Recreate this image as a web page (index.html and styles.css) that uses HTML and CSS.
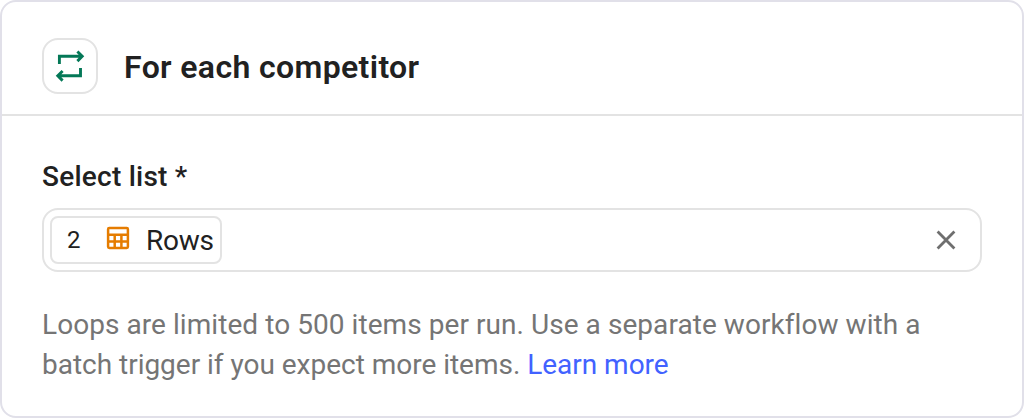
FILE: index.html
```
<!DOCTYPE html>
<html lang="en">
<head>
  <meta charset="UTF-8">
  <meta name="viewport" content="width=device-width, initial-scale=1.0">
  <link rel="stylesheet" href="styles.css">
  <title>For each competitor</title>
</head>
<body>
<div class="card">
  <div class="header">
    <div class="iconBox">
      <svg width="52" height="52" viewBox="44 40 52 52" fill="none" stroke="#047857" stroke-width="2.9">
        <path d="M59.4 64V56.3H82M77.4 51.5L82.2 56.3L77.4 61.1" />
        <path d="M80.5 68V75.8H58M62.6 71L57.8 75.8L62.6 80.6" />
      </svg>
    </div>
    <h1 class="title">For each competitor</h1>
  </div>
  <div class="content">
    <label class="label">Select list *</label>
    <div class="field">
      <div class="chip">
        <span class="chipNumber">2</span>
        <svg class="tableIcon" width="24" height="24" viewBox="0 0 24 24" fill="none" stroke="#e57c00" stroke-width="2.5">
          <rect x="2.1" y="2.1" width="19.8" height="19.8" rx="1.2" />
          <path d="M2 8.8H22M2 15.5H22M8.7 8.8V22M15.4 8.8V22" />
        </svg>
        <span class="chipText">Rows</span>
      </div>
      <svg class="clear" width="20" height="20" viewBox="0 0 20 20" fill="none" stroke="#6f6f6f" stroke-width="2.8">
        <path d="M1.6 1.6L18.4 18.4M18.4 1.6L1.6 18.4" />
      </svg>
    </div>
    <p class="help">
      <span class="lineOne">Loops are limited to 500 items per run. Use a separate workflow with a</span><br>
      <span class="lineTwo">batch trigger if you expect more items. <a class="link">Learn more</a></span>
    </p>
  </div>
</div>
</body>
</html>
```
FILE: styles.css
```
* {
  box-sizing: border-box;
}

body {
  margin: 0;
  background: #fff;
  color: #212121;
  font-family: Roboto, sans-serif;
}

.card {
  height: 418px;
  border: 2px solid #e1e0e9;
  border-radius: 16px;
  overflow: hidden;
}

.header {
  display: flex;
  align-items: center;
  gap: 26px;
  height: 114px;
  padding: 16px 40px 0;
  border-bottom: 2px solid #e3e3e3;
}

.iconBox {
  width: 56px;
  height: 56px;
  border: 2px solid #e3e3e3;
  border-radius: 16px;
}

.iconBox svg {
  display: block;
}

.title {
  margin: 2px 0 0;
  font-size: 32px;
  line-height: 40px;
  font-weight: 600;
  letter-spacing: 0.36px;
}

.content {
  padding: 41px 40px 0;
}

.label {
  display: block;
  font-size: 28px;
  line-height: 40px;
  font-weight: 500;
  letter-spacing: 0.24px;
}

.field {
  display: flex;
  align-items: center;
  justify-content: space-between;
  height: 64px;
  margin-top: 11px;
  padding: 0 24px 0 6px;
  border: 2px solid #e3e3e3;
  border-radius: 16px;
}

.chip {
  display: flex;
  align-items: center;
  width: 172px;
  height: 48px;
  padding-left: 15px;
  border: 2px solid #e3e3e3;
  border-radius: 8px;
}

.chipNumber {
  width: 39px;
  font-size: 24px;
}

.tableIcon {
  margin-top: -4px;
}

.chipText {
  margin-left: 16px;
  font-size: 28px;
  letter-spacing: -0.25px;
}

.help {
  margin: 33px 0 0;
  color: #757575;
  font-size: 28px;
  line-height: 40px;
  white-space: nowrap;
}

.lineOne {
  letter-spacing: 0.06px;
}

.lineTwo {
  letter-spacing: -0.02px;
}

.link {
  color: #4262ff;
}
```
